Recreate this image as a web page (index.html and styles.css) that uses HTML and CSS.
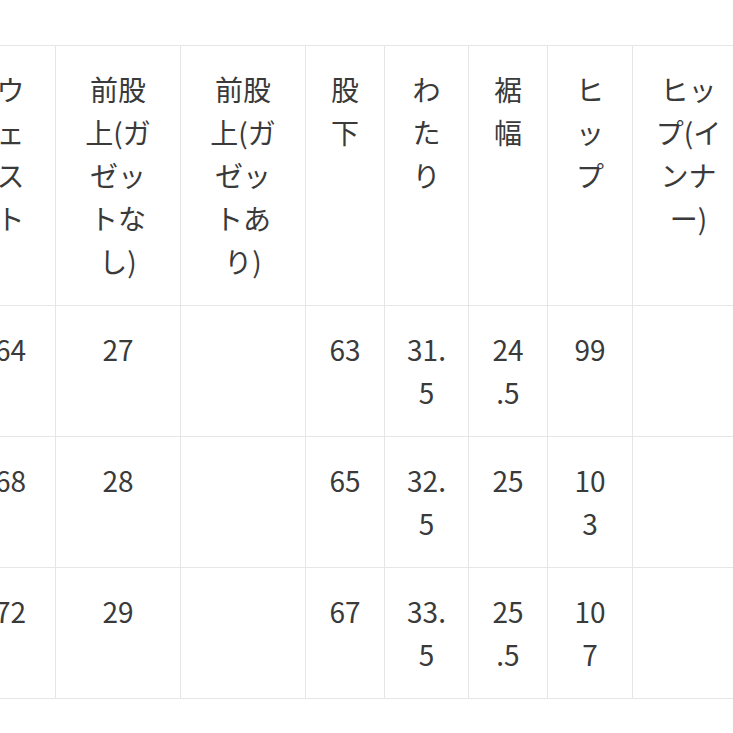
FILE: index.html
```html
<!DOCTYPE html>
<html lang="ja">
<head>
<meta charset="utf-8">
<title>サイズ表</title>
<link rel="stylesheet" href="styles.css">
</head>
<body>
<div class="wrap">
<table class="size-table">
<colgroup>
<col class="c-waist">
<col class="c-rise">
<col class="c-rise">
<col class="c-inseam">
<col class="c-thigh">
<col class="c-hem">
<col class="c-hip">
<col class="c-hipin">
</colgroup>
<thead>
<tr>
<th>ウェスト</th>
<th>前股上(ガゼットなし)</th>
<th>前股上(ガゼットあり)</th>
<th>股下</th>
<th>わたり</th>
<th>裾幅</th>
<th>ヒップ</th>
<th>ヒップ(インナー)</th>
</tr>
</thead>
<tbody>
<tr><td>64</td><td>27</td><td></td><td>63</td><td>31.5</td><td>24.5</td><td>99</td><td></td></tr>
<tr><td>68</td><td>28</td><td></td><td>65</td><td>32.5</td><td>25</td><td>103</td><td></td></tr>
<tr><td>72</td><td>29</td><td></td><td>67</td><td>33.5</td><td>25.5</td><td>107</td><td></td></tr>
</tbody>
</table>
</div>
</body>
</html>
```

FILE: styles.css
```css
html, body {
  margin: 0;
  padding: 0;
  background: #ffffff;
  overflow: hidden;
}

.wrap {
  padding-top: 45px;
  margin-left: -35px;
}

.size-table {
  border-collapse: collapse;
  table-layout: fixed;
  width: 779px;
  font-family: "Noto Sans CJK JP", "Noto Sans", sans-serif;
  font-size: 28px;
  line-height: 43px;
  color: #3a3a3a;
}

.c-waist { width: 90px; }
.c-rise { width: 125px; }
.c-inseam { width: 79px; }
.c-thigh { width: 84px; }
.c-hem { width: 79px; }
.c-hip { width: 85px; }
.c-hipin { width: 112px; }

.size-table th,
.size-table td {
  border: 1px solid #e6e6e6;
  padding: 22px 22px;
  vertical-align: top;
  text-align: center;
  font-weight: 400;
  line-break: anywhere;
  word-break: break-all;
}

.size-table tbody td {
  height: 85.6px;
}
```
